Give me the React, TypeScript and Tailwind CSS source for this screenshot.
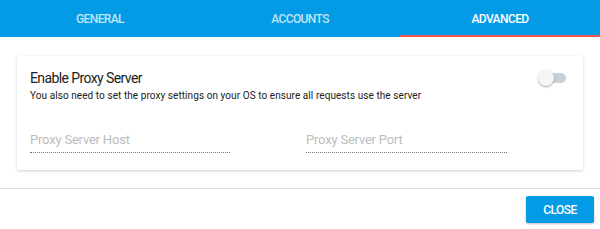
import React from "react";

export default function App() {
  const tabs = ["GENERAL", "ACCOUNTS", "ADVANCED"];
  return (
    <div className="w-[600px] h-[229px] bg-white flex flex-col" style={{ fontFamily: "Roboto, 'Liberation Sans', sans-serif" }}>
      <div className="flex h-[37px] bg-[#039be5]">
        {tabs.map((t, i) => (
          <div
            key={t}
            className={`flex-1 flex items-center justify-center pt-[3px] text-[12px] tracking-[-0.6px] font-medium border-b-2 ${
              i === 2 ? "text-white border-[#ef5350]" : "text-white/75 border-transparent"
            }`}
          >
            {t}
          </div>
        ))}
      </div>
      <div className="px-[17px] pt-[19px] pb-[18px]">
        <div className="rounded-[2px] bg-white shadow-[0_1px_3px_rgba(0,0,0,0.2)] h-[114px] pl-[13px] pr-[14px] pt-[12px]">
          <div className="flex items-start justify-between">
            <div className="text-[14px] tracking-[-0.6px] text-[#212121] leading-[20px]">Enable Proxy Server</div>
            <div className="relative w-[30px] h-[16px] mt-[2px] mr-[1px]">
              <div className="absolute left-[6px] top-[3px] w-[22px] h-[10px] rounded-full bg-[#c9d0d6]" />
              <div className="absolute left-0 top-0 w-[16px] h-[16px] rounded-full bg-[#f5f5f5] shadow-[0_1px_2px_rgba(0,0,0,0.35)]" />
            </div>
          </div>
          <div className="text-[10px] tracking-[0.07px] text-[#212121] leading-[14px] mt-[1px]">
            You also need to set the proxy settings on your OS to ensure all requests use the server
          </div>
          <div className="flex mt-[29px] gap-[76px]">
            <div className="w-[200px] border-b border-dotted border-[#757575] pb-[4px] text-[13px] tracking-[-0.2px] text-[#bdbdbd] leading-[16px]">
              Proxy Server Host
            </div>
            <div className="w-[201px] border-b border-dotted border-[#757575] pb-[4px] text-[13px] tracking-[-0.2px] text-[#bdbdbd] leading-[16px]">
              Proxy Server Port
            </div>
          </div>
        </div>
      </div>
      <div className="border-t border-[#e0e0e0] flex justify-end pt-[7px] pr-[6px]">
        <button className="w-[68px] h-[27px] rounded-[2px] bg-[#039be5] text-white text-[12px] tracking-[-0.5px] font-medium shadow-[0_1px_2px_rgba(0,0,0,0.25)]">
          CLOSE
        </button>
      </div>
    </div>
  );
}
